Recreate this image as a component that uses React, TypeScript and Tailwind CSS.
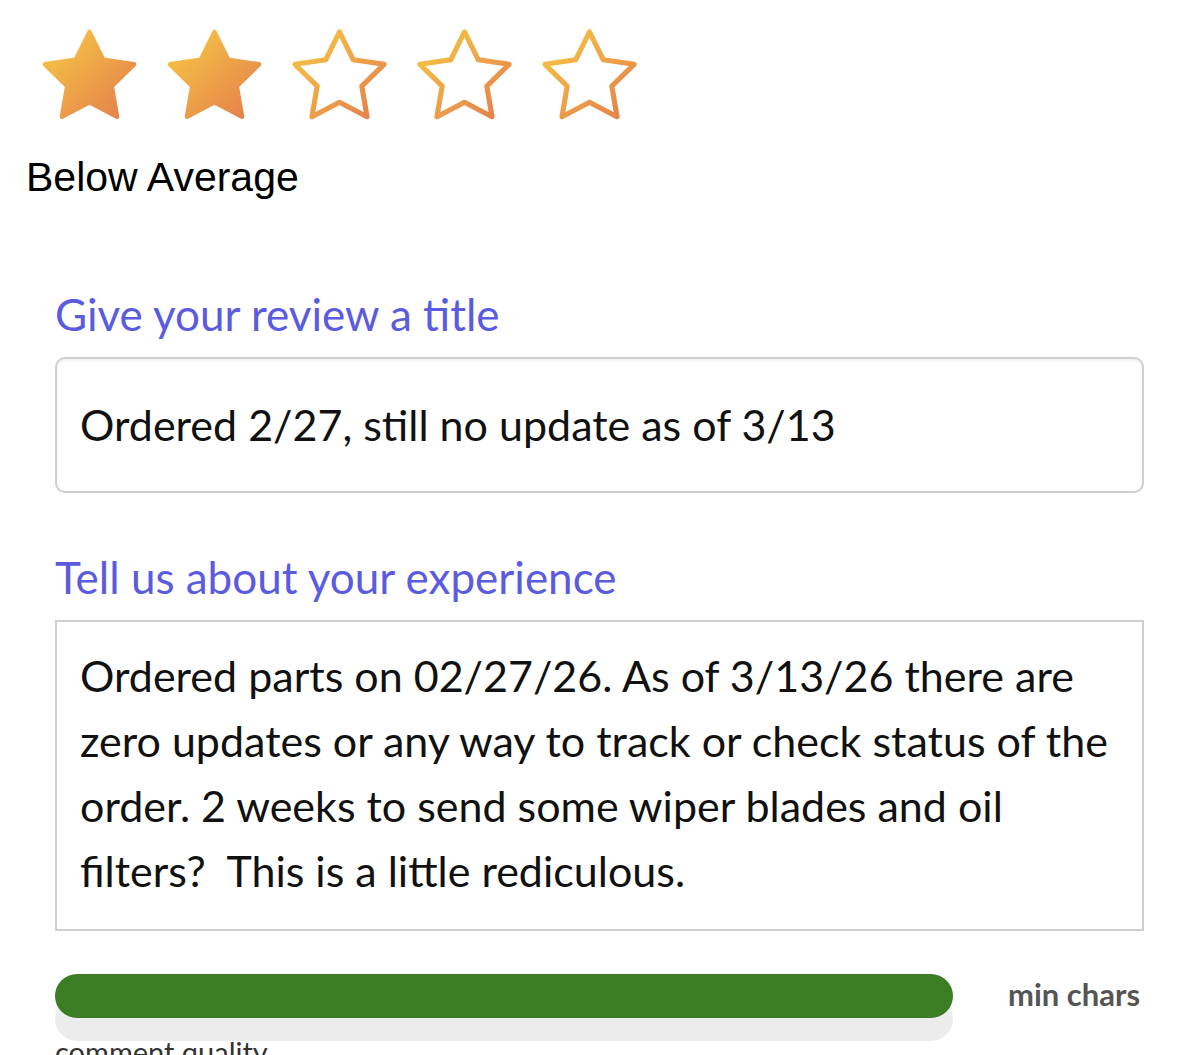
import React from "react";

const STAR =
  "M12 2l3.09 6.26L22 9.27l-5 4.87 1.18 6.88L12 17.77l-6.18 3.25L7 14.14 2 9.27l6.91-1.01L12 2z";

function Star({ filled, id }: { filled: boolean; id: string }) {
  return (
    <svg width="107" height="107" viewBox="0 0 24 24" className="shrink-0">
      <defs>
        <linearGradient id={id} x1="0" y1="0" x2="1" y2="1">
          <stop offset="0%" stopColor="#f7cb44" />
          <stop offset="100%" stopColor="#e47c4c" />
        </linearGradient>
      </defs>
      <path
        d={STAR}
        fill={filled ? `url(#${id})` : "none"}
        stroke={`url(#${id})`}
        strokeWidth={filled ? 1 : 1.15}
        strokeLinejoin="round"
      />
    </svg>
  );
}

const lines = [
  "Ordered parts on 02/27/26. As of 3/13/26 there are",
  "zero updates or any way to track or check status of the",
  "order. 2 weeks to send some wiper blades and oil",
  "filters?  This is a little rediculous.",
];

export default function App() {
  const jost = "font-['Lato','Liberation_Sans',sans-serif]";
  return (
    <div className="min-h-[1055px] w-[1199px] overflow-hidden bg-white pl-[26px]">
      <div className="ml-[10px] flex gap-[18px] pt-[23px]">
        {[0, 1, 2, 3, 4].map((i) => (
          <Star key={i} filled={i < 2} id={`sg${i}`} />
        ))}
      </div>
      <div className="mt-[24px] font-['Liberation_Sans',Arial,sans-serif] text-[41px] leading-[46px] text-black">
        Below Average
      </div>

      <div className={`ml-[29px] w-[1089px] ${jost}`}>
        <div className="mt-[90px] text-[44px] leading-[48px] text-[#5b5bdf]">
          Give your review a title
        </div>
        <div className="mt-[19px] flex h-[136px] items-center rounded-[10px] border-2 border-[#cfcfcf] pl-[23px] text-[43px] leading-[48px] text-[#111] shadow-[inset_0_2px_3px_rgba(0,0,0,0.06)]">
          Ordered 2/27, still no update as of 3/13
        </div>

        <div className="mt-[60px] text-[44px] leading-[48px] text-[#5b5bdf]">
          Tell us about your experience
        </div>
        <div className="mt-[19px] h-[311px] border-2 border-[#cfcfcf] pl-[23px] pt-[21px] text-[43px] leading-[65px] text-[#111]">
          {lines.map((l, i) => (
            <div key={i} className="whitespace-pre">
              {l}
            </div>
          ))}
        </div>

        <div className="mt-[43px] flex items-center">
          <div className="h-[44px] w-[898px] shrink-0 rounded-full bg-[#3a7d22] shadow-[0_23px_0_#ececec]" />
          <div className="mb-[4px] ml-[55px] text-[31px] font-bold leading-none text-[#555]">
            min chars
          </div>
        </div>
        <div className="mt-[19px] text-[29px] leading-none text-[#333]">
          comment quality
        </div>
      </div>
    </div>
  );
}
